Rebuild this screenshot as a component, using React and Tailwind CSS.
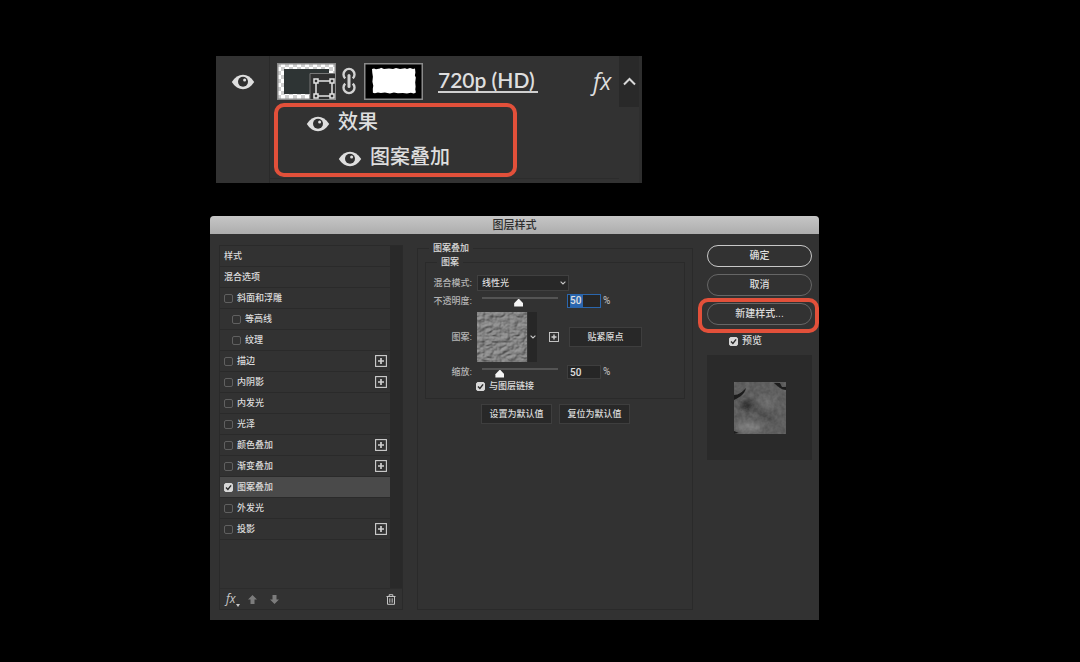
import { useState } from 'react';

const STYLES = [
  { name: '斜面和浮雕' },
  { name: '等高线', nested: true },
  { name: '纹理', nested: true },
  { name: '描边', multiple: true },
  { name: '内阴影', multiple: true },
  { name: '内发光' },
  { name: '光泽' },
  { name: '颜色叠加', multiple: true },
  { name: '渐变叠加', multiple: true },
  { name: '图案叠加' },
  { name: '外发光' },
  { name: '投影', multiple: true },
];

function Eye() {
  return (
    <svg width="24" height="16" viewBox="0 0 24 16" aria-hidden="true">
      <path d="M0.8 8C4 3.2 7.8 0.8 12 0.8S20 3.2 23.2 8C20 12.8 16.2 15.2 12 15.2S4 12.8 0.8 8Z" fill="#dedede" />
      <circle cx="12" cy="7.8" r="5" fill="#303030" />
      <circle cx="13.6" cy="6" r="1.5" fill="#dedede" />
    </svg>
  );
}

function ShapeThumb() {
  return (
    <svg width="59" height="37" viewBox="0 0 59 37" aria-hidden="true">
      <defs>
        <pattern id="checker" width="8" height="8" patternUnits="userSpaceOnUse">
          <rect width="8" height="8" fill="#fff" />
          <path d="M0 0h4v4H0zM4 4h4v4H4z" fill="#cfcfcf" />
        </pattern>
      </defs>
      <rect x="0.75" y="0.75" width="57.5" height="35.5" fill="url(#checker)" stroke="#8a8a8a" strokeWidth="1.5" />
      <rect x="7" y="6" width="45" height="25" fill="#2e3434" />
      <path d="M33 36V10.5h25V36z" fill="#303030" />
      <path d="M33 36V10.5h25" fill="none" stroke="#777" />
      <g fill="#303030" stroke="#e4e4e4" strokeWidth="1.5">
        <path d="M39 18h16v15H39z" />
        <path d="M37 16h4v4h-4zM53 16h4v4h-4zM37 31h4v4h-4zM53 31h4v4h-4z" />
      </g>
    </svg>
  );
}

function MaskThumb() {
  return (
    <svg width="59" height="37" viewBox="0 0 59 37" aria-hidden="true">
      <rect x="0.75" y="0.75" width="57.5" height="35.5" fill="#000" stroke="#8a8a8a" strokeWidth="1.5" />
      <path
        d="M8 6l2-.6 2 .9 4-.8 1-.7 3 1.1 5-.5 4 .6 3-1 4 1.1 5-.8 2 .7 3-1 3 .9 2-.4.4 4-.5 3 .9 2-.6 5 .4 4-.3 3 .6 3-2 .9-3-.6-4 .8-4-.7-5 .3-4-.7-4 .9-5-.8-4 .5-3-.7-3 .9-2-.5-.1-4 .5-3-.9-4 .5-5-.6-4z"
        fill="#fff"
      />
    </svg>
  );
}

function ChainLink() {
  return (
    <svg width="14" height="28" viewBox="0 0 14 28" fill="none" stroke="#d2d2d2" aria-hidden="true">
      <path d="M3.2 11.4A5.5 5.5 0 1 1 10.8 11.4M3.2 16.6A5.5 5.5 0 1 0 10.8 16.6" strokeWidth="2.4" />
      <path d="M7 8.5v11" strokeWidth="3" strokeLinecap="round" />
    </svg>
  );
}

function Plus({ size }) {
  return (
    <svg width={size} height={size} viewBox="0 0 12 12" fill="none" stroke="#cfcfcf" aria-hidden="true">
      <rect x="0.6" y="0.6" width="10.8" height="10.8" strokeWidth="1.1" />
      <path d="M6 3v6M3 6h6" strokeWidth="1.7" />
    </svg>
  );
}

function Chevron() {
  return (
    <svg width="6" height="4" viewBox="0 0 6 4" fill="none" stroke="#c8c8c8" strokeWidth="1.1" aria-hidden="true">
      <path d="M0.6 0.6L3 3l2.4-2.4" />
    </svg>
  );
}

function Checkbox({ label, defaultChecked, checked, onChange }) {
  return (
    <label className="flex items-center gap-1">
      <span className="relative block size-[9px]">
        <input
          type="checkbox"
          defaultChecked={defaultChecked}
          checked={checked}
          onChange={onChange}
          className="peer block size-[9px] appearance-none rounded-[2px] border border-[#606060] checked:border-[#d8d8d8] checked:bg-[#d8d8d8]"
        />
        <svg viewBox="0 0 9 9" className="pointer-events-none absolute inset-0 hidden peer-checked:block" aria-hidden="true">
          <path d="M2 4.6l1.9 1.9L7.1 2.4" fill="none" stroke="#2a2a2a" strokeWidth="1.4" />
        </svg>
      </span>
      {label}
    </label>
  );
}

function Slider({ label, defaultValue }) {
  return (
    <input
      type="range"
      aria-label={label}
      defaultValue={defaultValue}
      className="ml-[10px] block h-4 w-[76px] appearance-none bg-transparent [&::-webkit-slider-runnable-track]:h-[2px] [&::-webkit-slider-runnable-track]:bg-[#545454] [&::-webkit-slider-thumb]:mt-[2px] [&::-webkit-slider-thumb]:h-2 [&::-webkit-slider-thumb]:w-[9px] [&::-webkit-slider-thumb]:appearance-none [&::-webkit-slider-thumb]:bg-[#f4f4f4] [&::-webkit-slider-thumb]:[clip-path:polygon(50%_0,100%_60%,100%_100%,0_100%,0_60%)]"
    />
  );
}

function LayerPanel() {
  return (
    <section className="ml-[6px] flex w-[70%] bg-[#323232] text-[20px] leading-6 font-medium text-[#dedede]">
      <div className="flex w-[54px] shrink-0 flex-col border-r border-[#2a2a2a]">
        <button className="flex h-[51px] items-center justify-center" aria-label="720p (HD)">
          <Eye />
        </button>
      </div>
      <div className="flex min-w-0 flex-1 flex-col">
        <div className="flex h-[47px] items-center pb-[3px] pl-[7px] pt-[6px]">
          <ShapeThumb />
          <span className="ml-[6px]"><ChainLink /></span>
          <span className="ml-2"><MaskThumb /></span>
          <span className="ml-[15px] border-b-2 border-[#cfcfcf] pr-[3px] font-['Lato'] text-[21px] leading-[22px] font-semibold">720p (HD)</span>
          <span className="ml-auto pr-2 font-['Open_Sans'] text-[23px] font-normal italic">fx</span>
        </div>
        <div className="ml-[4px] w-[243px] rounded-[10px] border-4 border-[#e2503a] pb-[2px]">
          <div className="flex h-[30px] items-center gap-2 pl-7">
            <button aria-label="效果" className="pt-1"><Eye /></button>
            效果
          </div>
          <div className="mt-[6px] flex h-7 items-center gap-2 pl-[60px]">
            <button aria-label="图案叠加" className="pt-1"><Eye /></button>
            图案叠加
          </div>
        </div>
        <div className="mt-px h-[5px] border-t border-[#2c2c2c]" />
      </div>
      <div className="w-[23px] shrink-0 border-r-[3px] border-[#2e2e2e]">
        <button className="flex h-[51px] w-5 items-center justify-center bg-[#292929]" aria-label="收起">
          <svg width="13" height="9" viewBox="0 0 13 9" fill="none" stroke="#d8d8d8" strokeWidth="2" aria-hidden="true">
            <path d="M1 7.5l5.5-5.5L12 7.5" />
          </svg>
        </button>
      </div>
    </section>
  );
}

function StyleList() {
  const [enabled, setEnabled] = useState(['图案叠加']);

  const toggle = (name) =>
    setEnabled((list) => (list.includes(name) ? list.filter((n) => n !== name) : [...list, name]));

  return (
    <div className="mt-[3px] flex w-[184px] shrink-0 flex-col border border-[#2a2a2a]">
      <div className="flex flex-1">
        <ul className="flex-1 pb-12">
          {['样式', '混合选项'].map((name) => (
            <li key={name} className="flex h-[21px] items-center border-b border-[#2a2a2a] pl-1">{name}</li>
          ))}
          {STYLES.map(({ name, nested, multiple }) => (
            <li
              key={name}
              className={`flex h-[21px] items-center justify-between border-b border-[#2a2a2a] pr-[3px] ${nested ? 'pl-3' : 'pl-1'} ${enabled.includes(name) ? 'bg-[#4a4a4a]' : ''}`}
            >
              <Checkbox label={name} checked={enabled.includes(name)} onChange={() => toggle(name)} />
              {multiple && <button aria-label={`添加${name}`}><Plus size={12} /></button>}
            </li>
          ))}
        </ul>
        <div className="w-3 bg-[#292929]" />
      </div>
      <div className="flex h-[21px] items-center border-t border-[#2c2c2c] pl-[6px] pr-[6px]">
        <button className="flex items-end font-['Open_Sans'] text-[12px] leading-4 italic text-[#c8c8c8]" aria-label="fx">
          fx
          <svg width="4" height="3" viewBox="0 0 4 3" aria-hidden="true"><path d="M0 0h4L2 3z" fill="#c8c8c8" /></svg>
        </button>
        <button className="ml-2" aria-label="上移">
          <svg width="9" height="9" viewBox="0 0 9 9" fill="#7c7c7c" aria-hidden="true"><path d="M4.5 0L9 4.5H6.5V9h-4V4.5H0z" /></svg>
        </button>
        <button className="ml-[13px]" aria-label="下移">
          <svg width="9" height="9" viewBox="0 0 9 9" fill="#7c7c7c" aria-hidden="true"><path d="M4.5 9L0 4.5h2.5V0h4v4.5H9z" /></svg>
        </button>
        <button className="ml-auto" aria-label="删除">
          <svg width="10" height="11" viewBox="0 0 10 11" fill="none" stroke="#c4c4c4" aria-hidden="true">
            <path d="M0.5 2.5h9M3.2 2.2V.7h3.6v1.5M1.5 2.5v7.8h7V2.5M3.8 4.3v4.4M6.2 4.3v4.4" />
          </svg>
        </button>
      </div>
    </div>
  );
}

function PatternSwatch() {
  return (
    <svg width="50" height="50" viewBox="0 0 50 50" aria-hidden="true">
      <filter id="crumple" x="0" y="0" width="100%" height="100%" colorInterpolationFilters="sRGB">
        <feTurbulence type="turbulence" baseFrequency="0.12 0.16" numOctaves="4" seed="23" />
        <feColorMatrix values="0 0 0 0 0  0 0 0 0 0  0 0 0 0 0  1 0 0 0 0" />
        <feDiffuseLighting surfaceScale="1.1" lightingColor="#a0a0a0">
          <feDistantLight azimuth="235" elevation="55" />
        </feDiffuseLighting>
      </filter>
      <rect width="50" height="50" filter="url(#crumple)" />
    </svg>
  );
}

function PreviewSwatch() {
  return (
    <svg width="52" height="52" viewBox="0 0 52 52" aria-hidden="true">
      <defs>
        <filter id="grain" x="0" y="0" width="100%" height="100%" colorInterpolationFilters="sRGB">
          <feTurbulence type="fractalNoise" baseFrequency="0.25" numOctaves="3" seed="4" />
          <feColorMatrix values=".5 0 0 0 .1  .5 0 0 0 .1  .5 0 0 0 .1  0 0 0 0 1" />
        </filter>
        <filter id="soften"><feGaussianBlur stdDeviation="2.5" /></filter>
        <filter id="soften-edge"><feGaussianBlur stdDeviation="0.6" /></filter>
      </defs>
      <rect width="52" height="52" fill="#616161" />
      <g filter="url(#soften)">
        <path d="M14 22l26 16" stroke="#444" strokeWidth="5" />
        <ellipse cx="13" cy="23" rx="6" ry="5" fill="#222" />
        <ellipse cx="15" cy="45" rx="13" ry="5" fill="#8a8a8a" />
        <ellipse cx="34" cy="20" rx="9" ry="6" fill="#747474" />
      </g>
      <rect width="52" height="52" filter="url(#grain)" opacity="0.25" />
      <g filter="url(#soften-edge)">
        <path d="M0 13c5 0 8-3 12-7-1 5-5 9-12 12zM40 1h6l2 4 4 0v3c-4 0-8-3-12-7zM0 52v-3l5 2z" fill="#1d1d1d" />
      </g>
    </svg>
  );
}

const labelClass = 'w-[46px] shrink-0 text-right text-[#b4b4b4]';
const numberClass =
  'ml-[9px] h-[14px] w-[34px] border bg-[#262626] px-[2px] font-[Roboto] text-[10px] leading-3 text-[#e0e0e0]';
const squareButton = 'h-5 border border-[#3e3e3e] bg-[#282828]';

function PatternOverlay() {
  return (
    <fieldset className="min-w-0 flex-1 border border-[#2a2a2a] pl-[7px] pr-[7px]">
      <legend className="ml-1 px-1 leading-3">图案叠加</legend>
      <fieldset className="mt-[2px] min-w-0 border border-[#2a2a2a] pb-[6px]">
        <legend className="ml-[11px] px-1 leading-3">图案</legend>

        <div className="mt-[7px] flex h-4 items-center">
          <label htmlFor="blend" className={labelClass}>混合模式:</label>
          <div className="relative ml-[5px]">
            <select id="blend" className="block h-4 w-[92px] appearance-none border border-[#404040] bg-[#282828] pl-1">
              <option>线性光</option>
            </select>
            <span className="pointer-events-none absolute inset-y-0 right-[3px] flex items-center"><Chevron /></span>
          </div>
        </div>

        <div className="mt-[2px] flex h-4 items-center">
          <label htmlFor="opacity" className={labelClass}>不透明度:</label>
          <div className="pb-[7px]"><Slider label="不透明度滑块" defaultValue={48} /></div>
          <span className={`${numberClass} flex items-center border-[#2a66ad]`}>
            <input id="opacity" defaultValue="50" className="w-[13px] bg-[#2b66ae] outline-none" />
          </span>
          <span className="ml-[2px] font-[Roboto] text-[10px] text-[#b4b4b4]">%</span>
        </div>

        <div className="mt-[3px] flex h-[50px] items-center">
          <span className={labelClass}>图案:</span>
          <button className="ml-[5px] flex h-[50px] shrink-0" aria-label="选择图案">
            <PatternSwatch />
            <span className="ml-px flex h-[50px] w-[9px] items-center justify-center bg-[#272727]"><Chevron /></span>
          </button>
          <button className="ml-3" aria-label="新建预设"><Plus size={10} /></button>
          <button className={`${squareButton} ml-[10px] w-[73px]`}>贴紧原点</button>
        </div>

        <div className="mt-[2px] flex h-4 items-center">
          <label htmlFor="scale" className={labelClass}>缩放:</label>
          <div className="pb-[7px]"><Slider label="缩放滑块" defaultValue={20} /></div>
          <input id="scale" defaultValue="50" className={`${numberClass} border-[#3e3e3e]`} />
          <span className="ml-[2px] font-[Roboto] text-[10px] text-[#b4b4b4]">%</span>
        </div>

        <div className="flex h-3 items-center pl-[50px]">
          <Checkbox label="与图层链接" defaultChecked />
        </div>
      </fieldset>

      <div className="mt-[5px] flex gap-[7px] pl-[56px]">
        <button className={`${squareButton} w-[71px]`}>设置为默认值</button>
        <button className={`${squareButton} w-[71px]`}>复位为默认值</button>
      </div>
    </fieldset>
  );
}

function Actions() {
  const pill = 'h-[22px] w-full rounded-full border text-[10px]';
  return (
    <div className="mt-[3px] flex w-[105px] shrink-0 flex-col gap-[7px]">
      <button className={`${pill} border-[#c8c8c8]`}>确定</button>
      <button className={`${pill} border-[#666]`}>取消</button>
      <div className="relative">
        <button className={`${pill} border-[#666]`}>新建样式...</button>
        <div className="pointer-events-none absolute -bottom-[8px] -left-[9px] -right-[7px] -top-[5px] rounded-[10px] border-4 border-[#e2503a]" />
      </div>
      <div className="flex h-[18px] items-center pl-[22px] text-[10px]">
        <Checkbox label="预览" defaultChecked />
      </div>
      <div className="-mt-[2px] flex h-[105px] items-center justify-center bg-[#2a2a2a]">
        <PreviewSwatch />
      </div>
    </div>
  );
}

function LayerStyleDialog() {
  return (
    <section className="mt-[33px] overflow-hidden rounded-t-[4px] bg-[#323232] text-[9px] leading-3 font-medium text-[#dcdcdc]">
      <h1 className="flex h-[18px] items-center justify-center bg-linear-to-b from-[#c6c6c6] to-[#adadad] text-[11px] font-medium text-[#2e2e2e]">
        图层样式
      </h1>
      <div className="flex gap-[14px] pb-[10px] pl-[9px] pr-[7px] pt-2">
        <StyleList />
        <PatternOverlay />
        <Actions />
      </div>
    </section>
  );
}

export default function App() {
  return (
    <main className="min-h-screen bg-black pb-[42px] pl-[210px] pr-[261px] pt-[56px] font-['Liberation_Sans','Noto_Sans_CJK_SC',sans-serif]">
      <LayerPanel />
      <LayerStyleDialog />
    </main>
  );
}
